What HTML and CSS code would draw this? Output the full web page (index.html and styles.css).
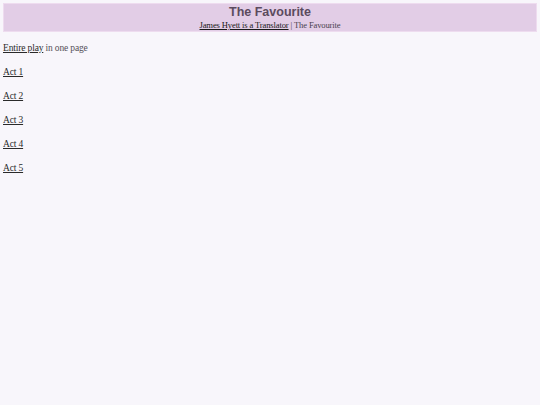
FILE: index.html
```html
<!DOCTYPE html>
<html>
<head>
<meta charset="utf-8">
<title>The Favourite</title>
<link rel="stylesheet" href="styles.css">
</head>
<body>
<header class="masthead">
  <h1 class="title">The Favourite</h1>
  <div class="crumbs"><a href="#">James Hyett is a Translator</a> | The Favourite</div>
</header>
<main class="contents">
  <p class="item"><a href="#">Entire play</a> in one page</p>
  <p class="item"><a href="#">Act 1</a></p>
  <p class="item"><a href="#">Act 2</a></p>
  <p class="item"><a href="#">Act 3</a></p>
  <p class="item"><a href="#">Act 4</a></p>
  <p class="item"><a href="#">Act 5</a></p>
</main>
</body>
</html>
```
FILE: styles.css
```css
html, body {
  margin: 0;
  background: #f8f6fb;
}
body {
  padding: 3px;
  font-family: "Liberation Serif", "Times New Roman", serif;
  color: #4a4250;
}
.masthead {
  background: #e2cde6;
  border: 1px solid #eedcef;
  text-align: center;
  padding: 0;
}
.title {
  margin: 0;
  font-family: "Liberation Sans", Arial, sans-serif;
  font-weight: bold;
  font-size: 12.5px;
  line-height: 16px;
  color: #5b4b5e;
}
.crumbs {
  font-size: 8.6px;
  line-height: 11px;
  letter-spacing: -0.15px;
  color: #4a4250;
}
.crumbs a {
  color: #1a1a1a;
}
.contents {
  display: flex;
  flex-direction: column;
  gap: 12px;
  padding-top: 10px;
}
.item {
  margin: 0;
  font-size: 9.5px;
  line-height: 12px;
  letter-spacing: -0.15px;
  color: #555058;
}
.item a {
  color: #2a2a2a;
}
```
